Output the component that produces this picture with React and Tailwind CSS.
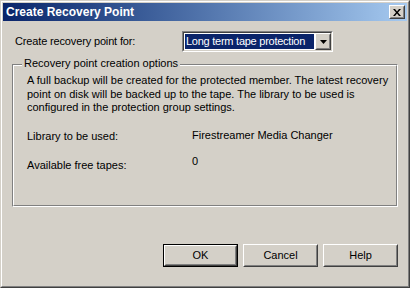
const raised = 'border border-t-white border-l-white border-r-[#404040] border-b-[#404040]';
const raisedInner = 'border border-t-[#d4d0c8] border-l-[#d4d0c8] border-r-[#808080] border-b-[#808080]';

const Button = ({ children, isDefault }) => (
  <div className={`w-[75px] h-[23px] ${isDefault ? 'border border-black' : ''}`}>
    <div className={`h-full ${raised}`}>
      <div className={`h-full flex items-center justify-center text-black ${raisedInner}`}>
        {children}
      </div>
    </div>
  </div>
);

export default function App() {
  return (
    <div
      className="w-[410px] h-[288px] bg-[#d4d0c8] text-[11px] text-black"
      style={{ fontFamily: '"Liberation Sans", Arial, sans-serif' }}
    >
      <div className="h-full border border-t-[#d4d0c8] border-l-[#d4d0c8] border-r-[#404040] border-b-[#404040]">
        <div className="h-full flex flex-col border border-t-white border-l-white border-r-[#808080] border-b-[#808080] p-[1px]">
          {/* title bar */}
          <div className="h-[18px] flex items-center justify-between bg-gradient-to-r from-[#0a246a] to-[#a6caf0] pl-[3px] pr-[2px]">
            <span className="text-white font-bold text-[12px] leading-none">Create Recovery Point</span>
            <div className={`w-[16px] h-[14px] ${raised}`}>
              <div className={`h-full flex items-center justify-center bg-[#d4d0c8] ${raisedInner}`}>
                <svg width="8" height="7" viewBox="0 0 8 7">
                  <path d="M0 0h2l2 2.5L6 0h2L5 3.5 8 7H6L4 4.5 2 7H0l3-3.5z" fill="#000" />
                </svg>
              </div>
            </div>
          </div>

          {/* combo row */}
          <div className="flex items-center mt-[10px] pl-[12px]">
            <span className="w-[167px] tracking-[-0.15px]">Create recovery point for:</span>
            <div className="w-[151px] h-[21px] border border-t-[#808080] border-l-[#808080] border-r-white border-b-white">
              <div className="h-full flex bg-white border border-t-[#404040] border-l-[#404040] border-r-[#d4d0c8] border-b-[#d4d0c8]">
                <div className="flex-1 p-[1px]">
                  <div className="h-full bg-[#0a246a] text-white flex items-center pl-[1px] leading-none tracking-[-0.25px]">
                    Long term tape protection
                  </div>
                </div>
                <div className={`w-[16px] h-full ${raised}`}>
                  <div className={`h-full flex items-center justify-center bg-[#d4d0c8] ${raisedInner}`}>
                    <svg width="7" height="4" viewBox="0 0 7 4">
                      <path d="M0 0h7L3.5 4z" fill="#000" />
                    </svg>
                  </div>
                </div>
              </div>
            </div>
          </div>

          {/* group box */}
          <div className="relative mt-[12px] mx-[9px] h-[143px] border border-t-[#808080] border-l-[#808080] border-r-white border-b-white">
            <span className="absolute -top-[8px] left-[9px] px-[2px] bg-[#d4d0c8] leading-[13px]">
              Recovery point creation options
            </span>
            <div className="h-full border border-t-white border-l-white border-r-[#808080] border-b-[#808080] pl-[13px] pt-[8px]">
              <p className="leading-[13.5px]">
                A full backup will be created for the protected member. The latest recovery
                <br />
                point on disk will be backed up to the tape. The library to be used is
                <br />
                configured in the protection group settings.
              </p>
              <div className="flex mt-[14px] leading-[13px]">
                <span className="w-[165px] mt-[1px]">Library to be used:</span>
                <span>Firestreamer Media Changer</span>
              </div>
              <div className="flex mt-[12px] leading-[13px]">
                <span className="w-[165px] mt-[4px]">Available free tapes:</span>
                <span>0</span>
              </div>
            </div>
          </div>

          {/* buttons */}
          <div className="flex justify-end gap-[5px] mt-[37px] mr-[9px]">
            <Button isDefault>OK</Button>
            <Button>Cancel</Button>
            <Button>Help</Button>
          </div>
        </div>
      </div>
    </div>
  );
}
